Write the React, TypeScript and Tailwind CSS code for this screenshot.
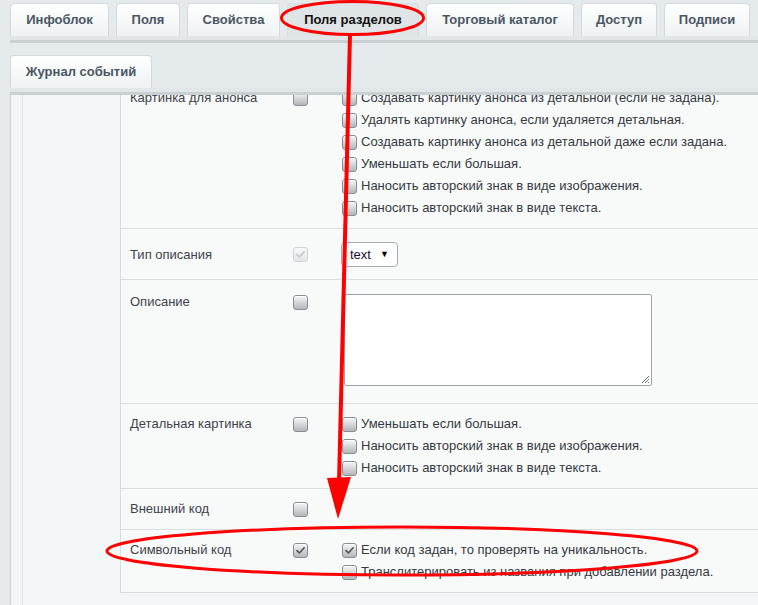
import type { ReactNode } from "react";

interface Tab {
  label: string;
  width: string;
  active?: boolean;
}

interface FieldRow {
  label: string;
  required?: boolean;
  disabled?: boolean;
  options?: { text: string; checked?: boolean }[];
  control?: "select" | "textarea";
}

const TOP_TABS: readonly Tab[] = [
  { label: "Инфоблок", width: "w-[99px]" },
  { label: "Поля", width: "w-[64px]" },
  { label: "Свойства", width: "w-[93px]" },
  { label: "Поля разделов", width: "w-[132px]", active: true },
  { label: "Торговый каталог", width: "w-[148px]" },
  { label: "Доступ", width: "w-[76px]" },
  { label: "Подписи", width: "w-[86px]" },
];

const SECOND_TABS: readonly Tab[] = [{ label: "Журнал событий", width: "w-[142px]" }];

const FIELD_ROWS: readonly FieldRow[] = [
  {
    label: "Картинка для анонса",
    options: [
      { text: "Создавать картинку анонса из детальной (если не задана)." },
      { text: "Удалять картинку анонса, если удаляется детальная." },
      { text: "Создавать картинку анонса из детальной даже если задана." },
      { text: "Уменьшать если большая." },
      { text: "Наносить авторский знак в виде изображения." },
      { text: "Наносить авторский знак в виде текста." },
    ],
  },
  { label: "Тип описания", required: true, disabled: true, control: "select" },
  { label: "Описание", control: "textarea" },
  {
    label: "Детальная картинка",
    options: [
      { text: "Уменьшать если большая." },
      { text: "Наносить авторский знак в виде изображения." },
      { text: "Наносить авторский знак в виде текста." },
    ],
  },
  { label: "Внешний код" },
  {
    label: "Символьный код",
    required: true,
    options: [
      { text: "Если код задан, то проверять на уникальность.", checked: true },
      { text: "Транслитерировать из названия при добавлении раздела." },
    ],
  },
];

function CheckBox({ checked, disabled }: { checked?: boolean; disabled?: boolean }): JSX.Element {
  return (
    <span
      className={
        disabled
          ? "flex h-[15px] w-[15px] shrink-0 items-center justify-center rounded-[3px] border border-[#cfd4d7] bg-linear-to-b from-[#f7f8f8] to-[#e3e6e8]"
          : "flex h-[15px] w-[15px] shrink-0 items-center justify-center rounded-[3px] border border-[#868e93] bg-linear-to-b from-[#f6f7f7] to-[#b3b8bb] shadow-[inset_0_1px_0_#ffffff]"
      }
    >
      {checked ? (
        <svg width="11" height="11" viewBox="0 0 11 11" fill="none">
          <path
            d="M2 5.6 L4.4 8 L9.2 2.8"
            stroke={disabled ? "#c4c9cc" : "#4d5357"}
            strokeWidth="1.6"
            strokeLinecap="round"
            strokeLinejoin="round"
          />
        </svg>
      ) : null}
    </span>
  );
}

function TabStrip({ tabs }: { tabs: readonly Tab[] }): JSX.Element {
  return (
    <div>
      <div className="flex gap-[7px] pl-[10px]">
        {tabs.map((tab) => (
          <div
            key={tab.label}
            className={
              tab.active
                ? `${tab.width} flex h-[33px] items-center justify-center rounded-t-[4px] border border-b-0 border-[#d6dcdf] bg-[#dfe5e7] text-[13px] font-bold text-[#111]`
                : `${tab.width} flex h-[33px] items-center justify-center rounded-t-[4px] border border-b-0 border-[#d2d8db] bg-linear-to-b from-[#ffffff] to-[#eef2f3] text-[13px] font-bold text-[#4a5664]`
            }
          >
            {tab.label}
          </div>
        ))}
      </div>
      <div className="ml-[10px] h-[7px] border-b-[3px] border-[#c9d0d3] bg-[#e1e6e8]" />
    </div>
  );
}

function Cell({ className, children }: { className: string; children?: ReactNode }): JSX.Element {
  return <div className={className}>{children}</div>;
}

function Row({ row }: { row: FieldRow }): JSX.Element {
  const lineHeight = row.control === "select" ? "h-[25px]" : "h-[22px]";
  const padding =
    row.control === "select"
      ? "pt-[13px] pb-[12px]"
      : row.control === "textarea"
        ? "pt-[11px] pb-[17px]"
        : "py-[9px]";

  return (
    <div className={`flex border-b border-[#d8dee1] ${padding}`}>
      <Cell className={`flex w-[163px] shrink-0 items-center pl-[9px] text-[#3d434a] ${lineHeight}`}>
        {row.label}
      </Cell>
      <Cell className={`flex w-[50px] shrink-0 items-center pl-[9px] ${lineHeight}`}>
        <CheckBox checked={row.required} disabled={row.disabled} />
      </Cell>
      <div className="flex-1">
        {row.control === "select" ? (
          <div className="pl-[7px]">
            <div className="flex h-[25px] w-[57px] items-center justify-between rounded-[4px] border border-[#a5acb1] bg-white pl-[8px] pr-[8px] text-[13px] text-[#1a0f2e]">
              <span>text</span>
              <span className="text-[9px] text-black">▼</span>
            </div>
          </div>
        ) : null}
        {row.control === "textarea" ? (
          <div className="pl-[10px] pt-[3px]">
            <div className="relative h-[92px] w-[308px] rounded-[2px] border border-[#9ba4ac] bg-white">
              <svg className="absolute bottom-[1px] right-[1px]" width="9" height="9" viewBox="0 0 9 9">
                <path d="M8 1 L1 8 M8 4 L4 8 M8 7 L7 8" stroke="#6b7075" strokeWidth="1" />
              </svg>
            </div>
          </div>
        ) : null}
        {row.options ? (
          <div className="pl-[8px]">
            {row.options.map((option) => (
              <div key={option.text} className="flex h-[22px] items-center gap-[4px] text-[#34393e]">
                <CheckBox checked={option.checked} />
                <span>{option.text}</span>
              </div>
            ))}
          </div>
        ) : null}
      </div>
    </div>
  );
}

export default function App(): JSX.Element {
  return (
    <div className="relative flex h-[605px] w-[758px] flex-col overflow-hidden bg-[#e5eaec] font-['Liberation_Sans',Arial,sans-serif] text-[13px]">
      <div className="pt-[3px]">
        <TabStrip tabs={TOP_TABS} />
      </div>
      <div className="pt-[12px]">
        <TabStrip tabs={SECOND_TABS} />
      </div>

      <div className="ml-[10px] flex min-h-0 flex-1 border-l border-[#c9d1d4] bg-[#f3f6f7]">
        <div className="w-[12px] shrink-0 border-r border-[#dce2e5]" />
        <div className="w-[97px] shrink-0" />
        <div className="min-w-0 flex-1 overflow-hidden">
          <div className="-mt-[17px] border-l border-[#d6dde0] bg-[#f8fafa]">
            {FIELD_ROWS.map((row) => (
              <Row key={row.label} row={row} />
            ))}
          </div>
        </div>
      </div>

      {/* red markup drawn on top of the form */}
      <svg className="pointer-events-none absolute left-0 top-0" width="758" height="605" viewBox="0 0 758 605" fill="none">
        <ellipse cx="352.5" cy="18" rx="71" ry="16.5" stroke="#ff0000" strokeWidth="3" />
        <path d="M350 34 L339 482" stroke="#ff0000" strokeWidth="4" />
        <path d="M327 478 L351 477 L338 519 Z" fill="#ff0000" />
        <ellipse cx="402" cy="551" rx="295" ry="24" stroke="#ff0000" strokeWidth="3" />
      </svg>
    </div>
  );
}
